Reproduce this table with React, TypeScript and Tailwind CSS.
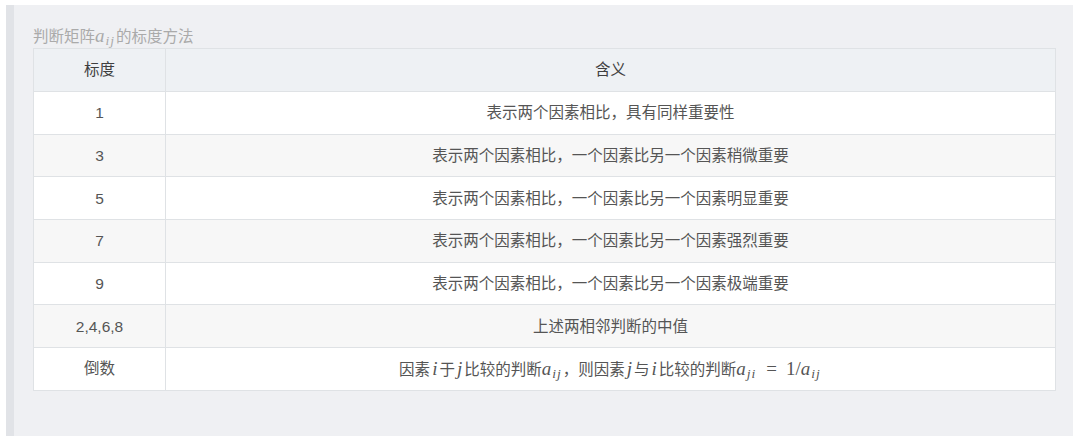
import React from "react";

const cjk = { fontFamily: '"Liberation Sans", "Noto Sans CJK SC", sans-serif' };
const mathFont = { fontFamily: '"Liberation Serif", "DejaVu Serif", serif' };

function V({ c }: { c: string }) {
  return (
    <span className="italic text-[19px] mx-[2px]" style={mathFont}>
      {c}
    </span>
  );
}

function A({ sub }: { sub: string }) {
  return (
    <span className="whitespace-nowrap" style={mathFont}>
      <span className="italic text-[19px]">a</span>
      <span className="italic text-[13.5px] relative top-[3px] ml-[1px] mr-[1px] tracking-[1px]">{sub}</span>
    </span>
  );
}

const rows: { scale: string; meaning: React.ReactNode }[] = [
  { scale: "1", meaning: "表示两个因素相比，具有同样重要性" },
  { scale: "3", meaning: "表示两个因素相比，一个因素比另一个因素稍微重要" },
  { scale: "5", meaning: "表示两个因素相比，一个因素比另一个因素明显重要" },
  { scale: "7", meaning: "表示两个因素相比，一个因素比另一个因素强烈重要" },
  { scale: "9", meaning: "表示两个因素相比，一个因素比另一个因素极端重要" },
  { scale: "2,4,6,8", meaning: "上述两相邻判断的中值" },
  {
    scale: "倒数",
    meaning: (
      <>
        因素<V c="i" />于<V c="j" />比较的判断<A sub="ij" />，则因素<V c="j" />与<V c="i" />比较的判断
        <A sub="ji" />
        <span className="text-[19px] mx-[9px]" style={mathFont}>=</span>
        <span className="text-[19px]" style={mathFont}>1/</span>
        <A sub="ij" />
      </>
    ),
  },
];

export default function App() {
  return (
    <div className="w-[1080px] h-[441px] bg-white pt-[5px] pl-[6px]" style={cjk}>
      <div className="w-[1067px] h-[431px] bg-[#eff0f3] border-l-[8px] border-[#e1e3e7] pl-[19px] pt-[21px]">
        <div className="h-[22px] text-[15.5px] leading-[20px] text-[#aaaaaa]">
          判断矩阵<A sub="ij" />的标度方法
        </div>
        <table className="w-[1023px] border-collapse border border-[#dfe2e5] text-[15.5px] text-[#555]">
          <thead>
            <tr className="h-[43px] bg-[#eef1f4] text-[#3f3f3f]">
              <th className="w-[132px] font-normal border border-[#dfe2e5]">标度</th>
              <th className="font-normal border border-[#dfe2e5]">含义</th>
            </tr>
          </thead>
          <tbody>
            {rows.map((r, i) => (
              <tr
                key={r.scale}
                className={`h-[42.7px] ${i % 2 === 1 ? "bg-[#f7f7f7]" : "bg-white"}`}
              >
                <td className="text-center border border-[#dfe2e5]">{r.scale}</td>
                <td className="text-center border border-[#dfe2e5]">{r.meaning}</td>
              </tr>
            ))}
          </tbody>
        </table>
      </div>
    </div>
  );
}
